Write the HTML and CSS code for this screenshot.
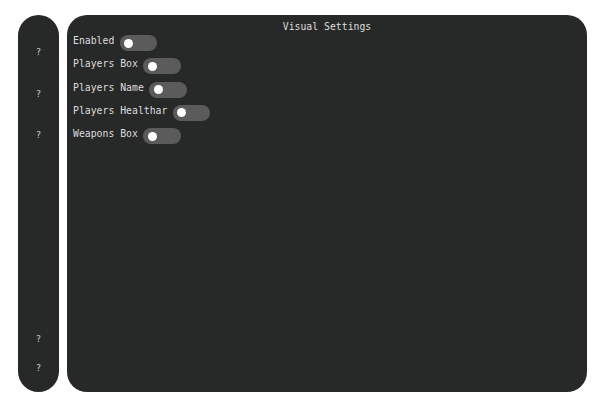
FILE: index.html
```html
<!DOCTYPE html>
<html>
<head>
<meta charset="utf-8">
<link rel="stylesheet" href="styles.css">
</head>
<body>
<div class="app">
  <nav class="sidebar">
    <div class="tabs">
      <span class="tab">?</span>
      <span class="tab">?</span>
      <span class="tab">?</span>
    </div>
    <div class="tabs tabs-bottom">
      <span class="tab">?</span>
      <span class="tab">?</span>
    </div>
  </nav>
  <main class="panel">
    <div class="title">Visual Settings</div>
    <div class="rows">
      <div class="row"><span class="label">Enabled</span><span class="toggle"><span class="knob"></span></span></div>
      <div class="row"><span class="label">Players Box</span><span class="toggle"><span class="knob"></span></span></div>
      <div class="row"><span class="label">Players Name</span><span class="toggle"><span class="knob"></span></span></div>
      <div class="row"><span class="label">Players Healthar</span><span class="toggle"><span class="knob"></span></span></div>
      <div class="row"><span class="label">Weapons Box</span><span class="toggle"><span class="knob"></span></span></div>
    </div>
  </main>
</div>
</body>
</html>
```

FILE: styles.css
```css
html, body {
  margin: 0;
  padding: 0;
  background: #ffffff;
}
body {
  font-family: "DejaVu Sans Mono", "Liberation Mono", monospace;
  font-size: 9.8px;
  color: #dedede;
}
.app {
  display: flex;
  gap: 8px;
  padding: 15px 0 0 18px;
}
.sidebar {
  width: 41px;
  height: 377px;
  box-sizing: border-box;
  background: #272828;
  border-radius: 20.5px;
  display: flex;
  flex-direction: column;
  justify-content: space-between;
  align-items: center;
  padding: 31px 0 18px;
}
.tabs {
  display: flex;
  flex-direction: column;
  align-items: center;
  gap: 29.5px;
}
.tabs-bottom {
  gap: 17px;
}
.tab {
  display: block;
  height: 12px;
  line-height: 12px;
  font-size: 9px;
  color: #cfcfcf;
}
.panel {
  width: 520px;
  height: 377px;
  box-sizing: border-box;
  background: #272828;
  border-radius: 20px;
  padding: 6px 6px 0;
}
.title {
  text-align: center;
  line-height: 12px;
}
.rows {
  margin-top: 2px;
  display: flex;
  flex-direction: column;
  gap: 7.3px;
}
.row {
  display: flex;
  align-items: flex-start;
  gap: 5.5px;
  height: 16px;
}
.label {
  line-height: 12px;
  white-space: pre;
}
.toggle {
  width: 37.5px;
  height: 16px;
  border-radius: 8px;
  background: #5b5b5b;
  display: flex;
  align-items: center;
  padding-left: 4.5px;
  box-sizing: border-box;
}
.knob {
  width: 9px;
  height: 9px;
  border-radius: 50%;
  background: #ffffff;
}
```
